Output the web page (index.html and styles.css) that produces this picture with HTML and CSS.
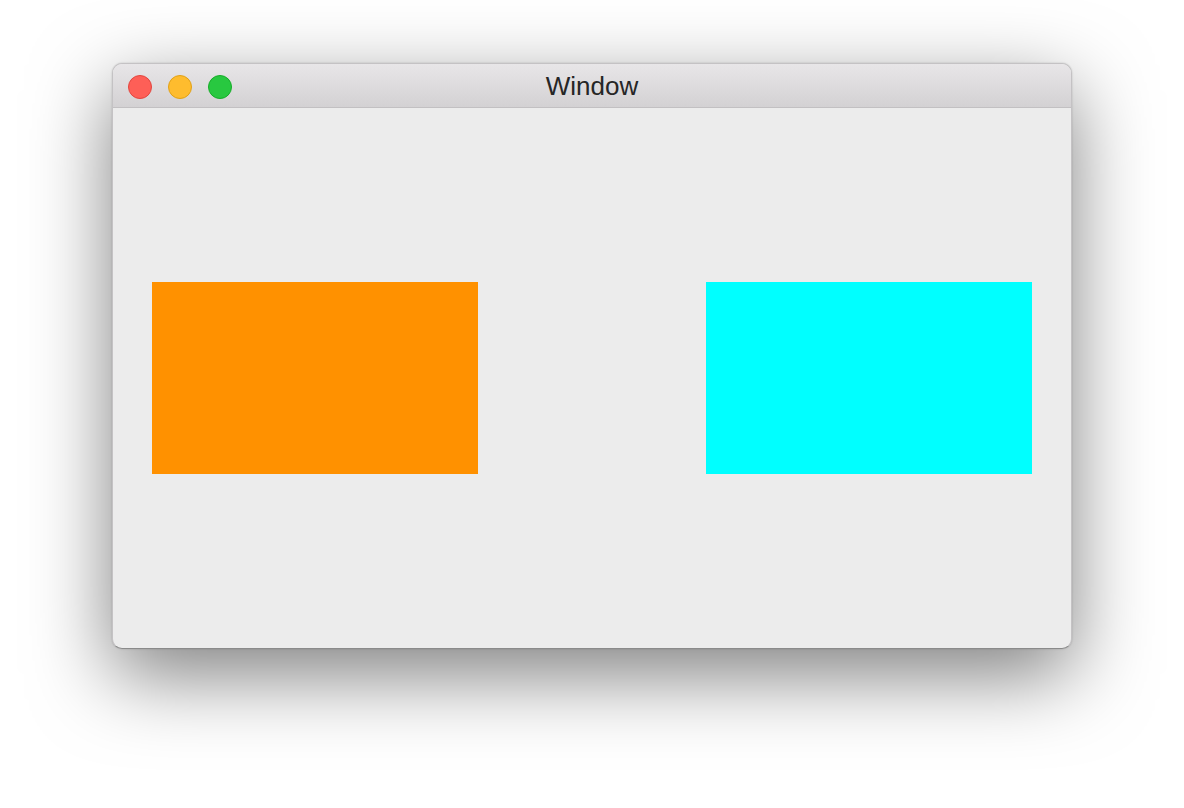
FILE: index.html
```html
<!DOCTYPE html>
<html>
<head>
<meta charset="utf-8">
<link rel="stylesheet" href="styles.css">
</head>
<body>
<div class="window">
  <div class="titlebar">
    <div class="lights">
      <span class="light red"></span>
      <span class="light yellow"></span>
      <span class="light green"></span>
    </div>
    <div class="title">Window</div>
  </div>
  <div class="content">
    <div class="box orange"></div>
    <div class="box cyan"></div>
  </div>
</div>
</body>
</html>
```
FILE: styles.css
```css
html, body {
  margin: 0;
  padding: 0;
  background: #ffffff;
}
body {
  width: 1184px;
  height: 808px;
  overflow: hidden;
}
.window {
  margin: 63px 0 0 112px;
  width: 960px;
  height: 586px;
  box-sizing: border-box;
  border: 1px solid #c4c2c4;
  border-bottom-color: #8a8a8a;
  border-radius: 10px;
  overflow: hidden;
  background: #ececec;
  box-shadow: 0 26px 80px rgba(0, 0, 0, 0.5), 0 0 2px rgba(0, 0, 0, 0.2);
  display: flex;
  flex-direction: column;
}
.titlebar {
  position: relative;
  height: 43px;
  flex: 0 0 auto;
  background: linear-gradient(#e8e6e8, #d3d1d3);
  border-bottom: 1px solid #c2c0c2;
  display: flex;
  align-items: center;
  justify-content: center;
}
.lights {
  position: absolute;
  left: 15px;
  top: 11px;
  display: flex;
  gap: 16px;
}
.light {
  width: 24px;
  height: 24px;
  border-radius: 50%;
  box-sizing: border-box;
}
.red { background: #fe5f57; border: 1px solid #e2463f; }
.yellow { background: #febc2e; border: 1px solid #e1a116; }
.green { background: #28c840; border: 1px solid #16ad29; }
.title {
  font-family: "Liberation Sans", Arial, sans-serif;
  font-size: 26px;
  color: #262626;
  margin-top: 1px;
}
.content {
  flex: 1 1 auto;
  display: flex;
  align-items: center;
  justify-content: space-between;
  padding: 0 39px;
}
.box {
  width: 326px;
  height: 192px;
}
.orange { background: #ff9100; }
.cyan { background: #00ffff; }
```
